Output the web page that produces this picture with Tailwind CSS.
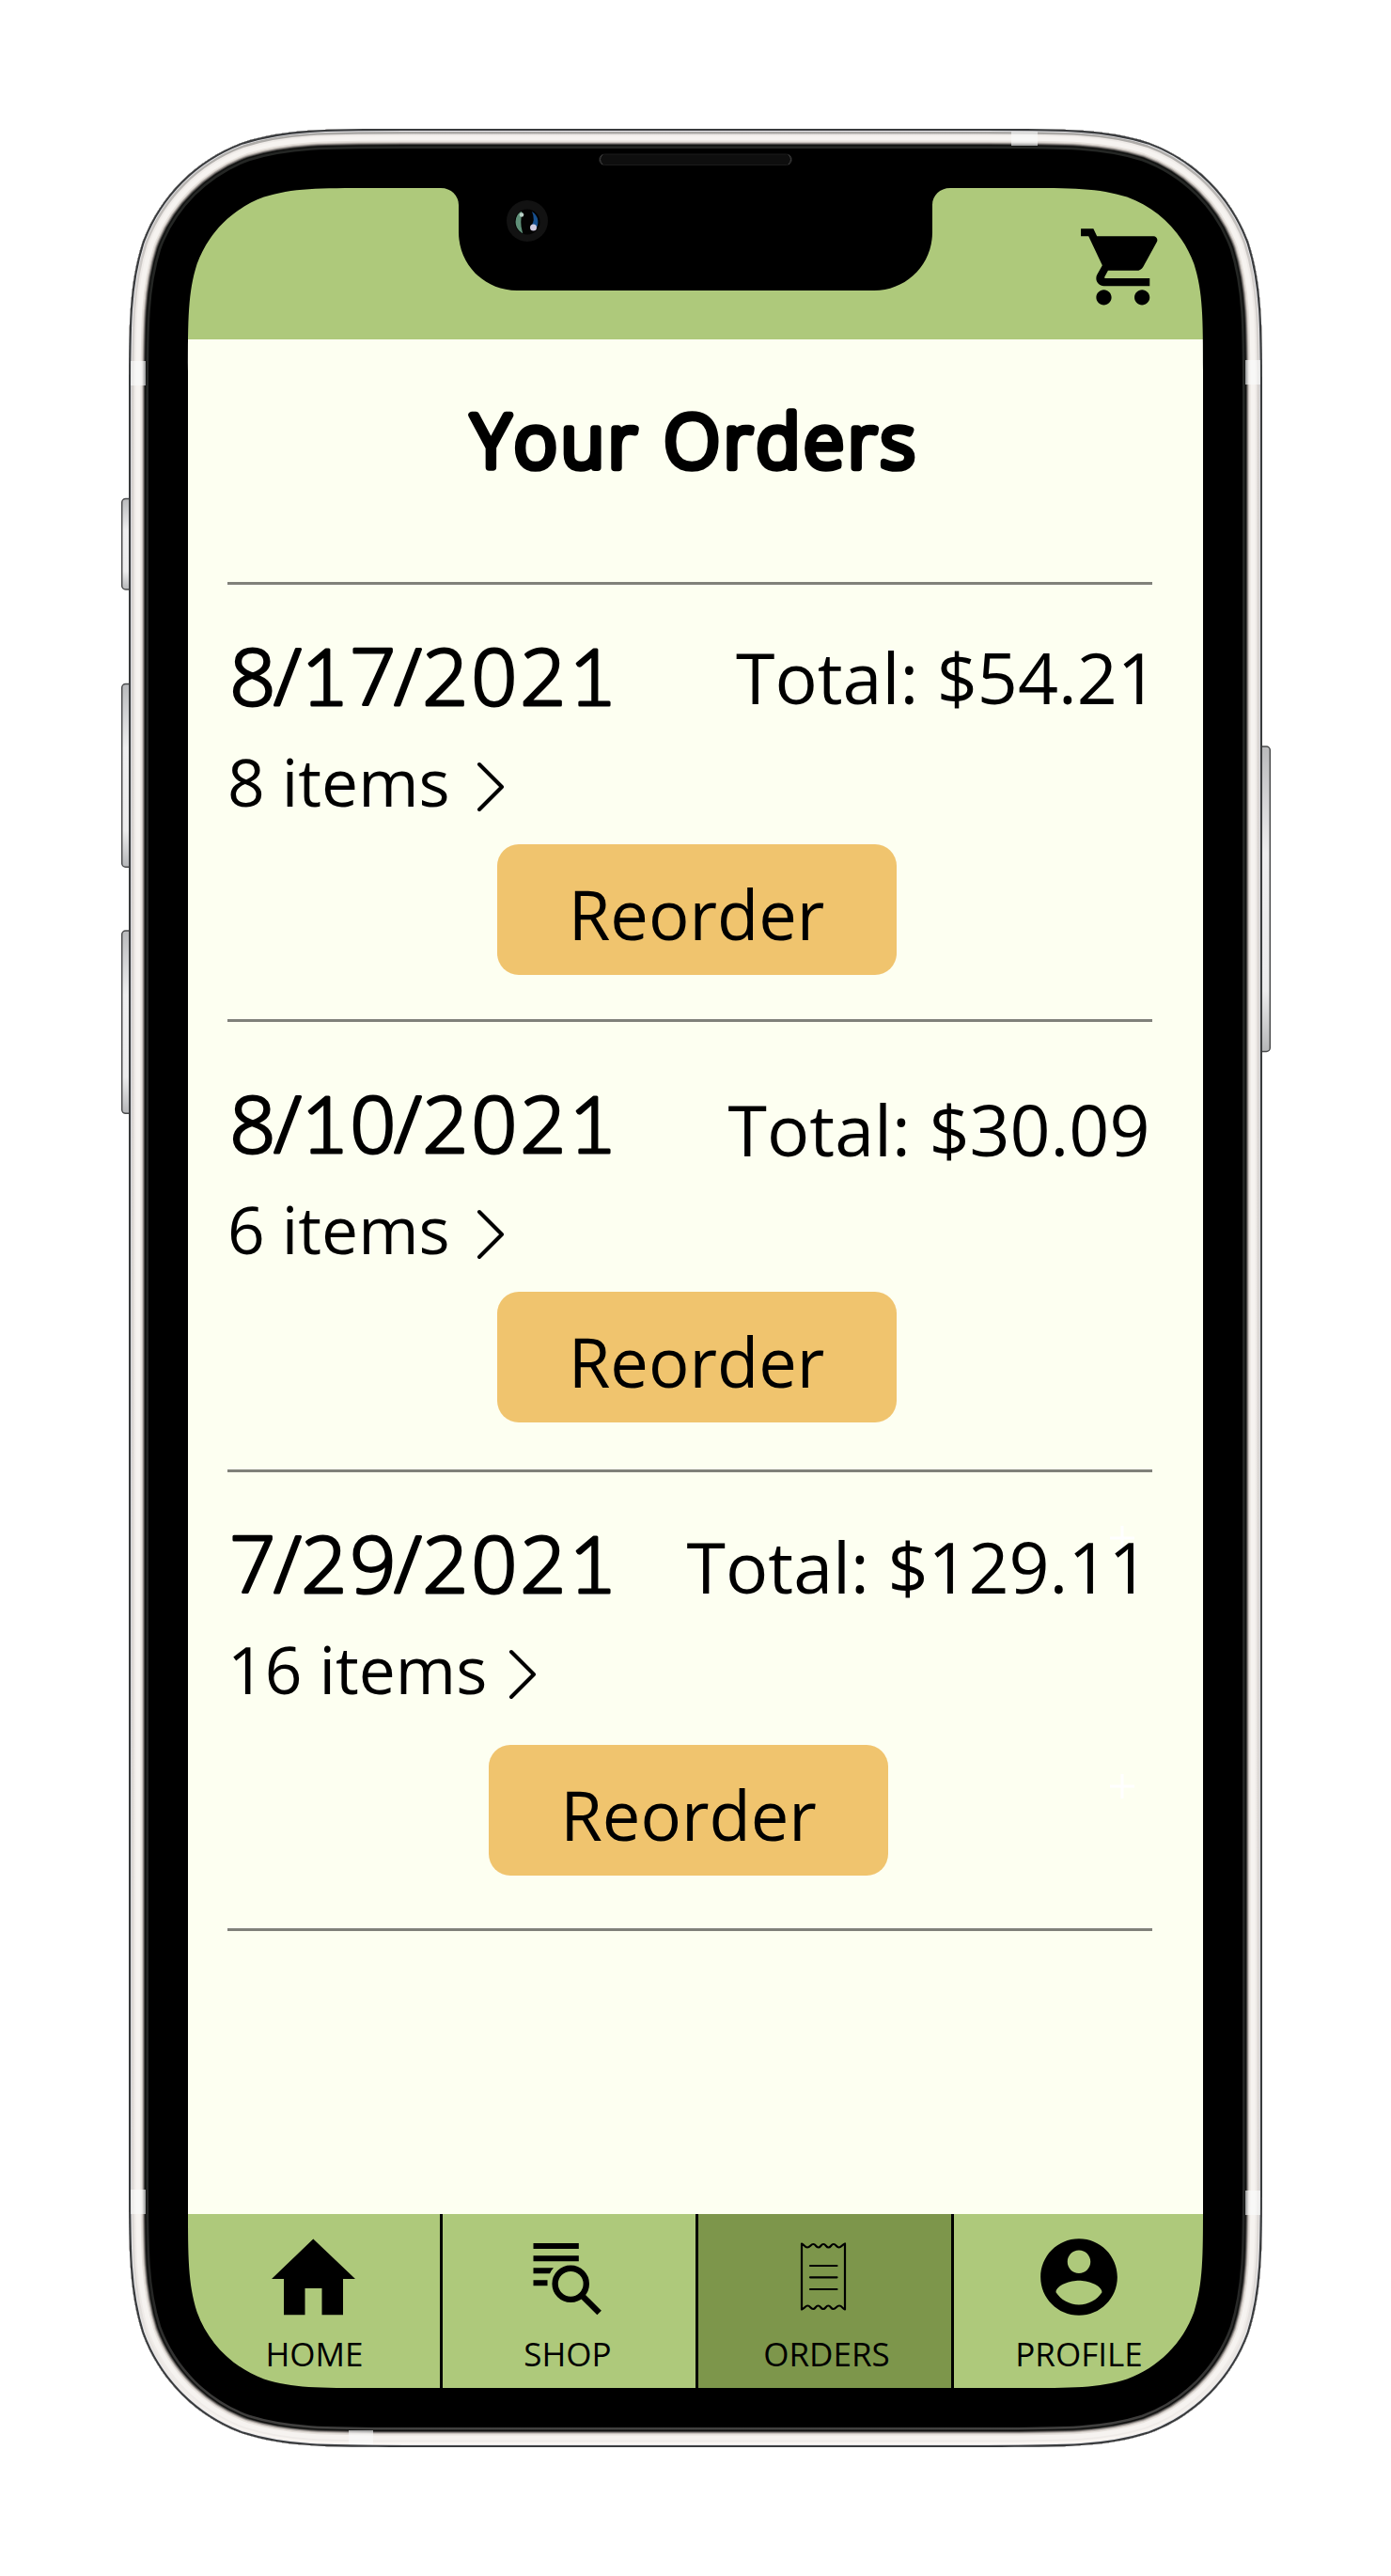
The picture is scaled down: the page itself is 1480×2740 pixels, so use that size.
<!DOCTYPE html>
<html lang="en">
<head>
<meta charset="utf-8">
<title>Your Orders</title>
<script src="https://cdn.jsdelivr.net/npm/@tailwindcss/browser@4"></script>
</head>
<body class="bg-white">
<div class="relative h-[2740px] w-[1480px] overflow-hidden p-[200px] font-['Open_Sans',sans-serif] text-black">

  <!-- App screen -->
  <div class="flex h-[2340px] w-[1080px] flex-col bg-[#fdfff1]">
    <header class="flex h-[161px] shrink-0 items-start justify-end bg-[#aec97b] pr-[36px] pt-[35px]">
      <svg class="size-[97.6px]" viewBox="0 0 24 24"><path d="M7 18c-1.1 0-1.99.9-1.99 2S5.9 22 7 22s2-.9 2-2-.9-2-2-2zM1 2v2h2l3.6 7.59-1.35 2.45c-.16.28-.25.61-.25.96 0 1.1.9 2 2 2h12v-2H7.42c-.14 0-.25-.11-.25-.25l.03-.12.9-1.63h7.45c.75 0 1.41-.41 1.75-1.03l3.58-6.49c.08-.14.12-.31.12-.48 0-.55-.45-1-1-1H5.21l-.94-2H1zm16 16c-1.1 0-1.99.9-1.99 2s.89 2 1.99 2 2-.9 2-2-.9-2-2-2z"/></svg>
    </header>

    <main class="relative isolate flex flex-1 flex-col pl-[42px] pr-[54px]">
      <h1 class="h-[258px] shrink-0">
        <svg class="h-[258px] w-[984px]" fill="#000" stroke="#000" stroke-width="7.6" stroke-linejoin="round" font-family="'Open Sans',sans-serif" font-weight="300" font-size="77"><text x="260" y="136" textLength="471">Your Orders</text></svg>
      </h1>

      <section class="flex h-[465px] shrink-0 flex-col border-t-[3px] border-[#80817a] pt-[58px]">
        <div class="flex h-[80px] items-start">
          <svg class="h-[80px] w-[410px] shrink-0 overflow-visible" fill="#000" stroke="#000" stroke-width="3" stroke-linejoin="round" font-family="'Open Sans',sans-serif" font-weight="300" font-size="82"><text transform="scale(1.04 1)" y="70" x="2.4 47.6 75.5 125.5 170.7 199.5 249.5 299.5 349.5">8/<tspan font-family="Lato">1</tspan>7/202<tspan font-family="Lato">1</tspan></text></svg>
          <span class="ml-[131px] whitespace-nowrap text-[75.3px] leading-[80px]">Total: $54.21</span>
        </div>
        <a class="mt-[31px] flex h-[80px] items-center text-[69.5px] leading-[80px]"><span>8 items</span>
          <svg class="ml-[28px] mt-[12px] h-[56px] w-[32px]" viewBox="0 0 32 56" fill="none" stroke="#000" stroke-width="4" stroke-linecap="round" stroke-linejoin="round"><path d="M3 4 27 28 3 52"/></svg></a>
        <button class="ml-[286.5px] mt-[27px] flex h-[138.5px] w-[425px] items-center justify-center rounded-[23px] bg-[#f0c46e] pt-[9px] text-[72.3px] leading-none">Reorder</button>
      </section>

      <section class="flex h-[479px] shrink-0 flex-col border-t-[3px] border-[#80817a] pt-[69px]">
        <div class="flex h-[80px] items-start">
          <svg class="h-[80px] w-[410px] shrink-0 overflow-visible" fill="#000" stroke="#000" stroke-width="3" stroke-linejoin="round" font-family="'Open Sans',sans-serif" font-weight="300" font-size="82"><text transform="scale(1.04 1)" y="70" x="2.4 47.6 75.5 125.5 170.7 199.5 249.5 299.5 349.5">8/<tspan font-family="Lato">1</tspan>0/202<tspan font-family="Lato">1</tspan></text></svg>
          <span class="ml-[122.6px] mt-[5px] whitespace-nowrap text-[75.3px] leading-[80px]">Total: $30.09</span>
        </div>
        <a class="mt-[31px] flex h-[80px] items-center text-[69.5px] leading-[80px]"><span>6 items</span>
          <svg class="ml-[28px] mt-[12px] h-[56px] w-[32px]" viewBox="0 0 32 56" fill="none" stroke="#000" stroke-width="4" stroke-linecap="round" stroke-linejoin="round"><path d="M3 4 27 28 3 52"/></svg></a>
        <button class="ml-[286.5px] mt-[27px] flex h-[138.5px] w-[425px] items-center justify-center rounded-[23px] bg-[#f0c46e] pt-[9px] text-[72.3px] leading-none">Reorder</button>
      </section>

      <section class="flex h-[491px] shrink-0 flex-col border-y-[3px] border-[#80817a] pt-[58px]">
        <div class="flex h-[80px] items-start">
          <svg class="h-[80px] w-[410px] shrink-0 overflow-visible" fill="#000" stroke="#000" stroke-width="3" stroke-linejoin="round" font-family="'Open Sans',sans-serif" font-weight="300" font-size="82"><text transform="scale(1.04 1)" y="70" x="2.4 47.6 75.5 125.5 170.7 199.5 249.5 299.5 349.5">7/29/202<tspan font-family="Lato">1</tspan></text></svg>
          <span class="ml-[78.6px] mt-[2px] whitespace-nowrap text-[75.3px] leading-[80px]">Total: $129.11</span>
        </div>
        <a class="mt-[31px] flex h-[80px] items-center text-[69.5px] leading-[80px]"><span>16 items</span>
          <svg class="ml-[23px] mt-[12px] h-[56px] w-[32px]" viewBox="0 0 32 56" fill="none" stroke="#000" stroke-width="4" stroke-linecap="round" stroke-linejoin="round"><path d="M3 4 27 28 3 52"/></svg></a>
        <button class="ml-[278px] mt-[41px] flex h-[138.5px] w-[425px] items-center justify-center rounded-[23px] bg-[#f0c46e] pt-[9px] text-[72.3px] leading-none">Reorder</button>
      </section>

      <svg class="absolute left-[981px] top-[1262px] -z-10 h-[290px] w-[26px]" stroke="#fff" stroke-width="3"><path d="M13 0v26M0 13h26M13 264v26M0 277h26"/></svg>
    </main>

    <nav class="flex h-[185px] shrink-0 bg-[#aec97b] text-[35px] leading-[40px]">
      <a class="flex w-[271px] flex-col items-center border-r-[3px] border-black">
        <svg class="mt-[20px] h-[90px] w-[100px]" viewBox="0 0 100 90"><path d="M49.3 6.5 94 49H81v38.300H58.500V59H40.500V87.300H18V49H5Z"/></svg>
        <span class="mt-[19px] pl-px">HOME</span>
      </a>
      <a class="flex w-[272px] flex-col items-center border-r-[3px] border-black">
        <svg class="mt-[20px] h-[90px] w-[100px]" viewBox="555.5 2375 100 90"><path d="M567 2386h48.300v6H567zM567 2399.200h48.300v6H567zM567 2412.300h21.500q-2.500 2.500-4 6H567zM567 2425.300h15v6H567z"/><circle cx="606.700" cy="2429.300" r="16.600" fill="none" stroke="#000" stroke-width="6.400"/><path d="m618.500 2441.500 18.600 18.500" stroke="#000" stroke-width="6.400"/></svg>
        <span class="mt-[19px] pr-[3px]">SHOP</span>
      </a>
      <a class="flex w-[272px] flex-col items-center border-r-[3px] border-black bg-[#7d964b]">
        <svg class="mt-[20px] h-[90px] w-[100px]" viewBox="827.5 2375 100 90" fill="none" stroke="#000" stroke-width="2.200" stroke-linecap="round" stroke-linejoin="round"><path d="M852.500 2386.500c3 1 3 4 6 4s3.500-3.500 6.300-3.500 2.700 3.500 5.400 3.500 2.700-3.500 5.400-3.500 2.700 3.500 5.400 3.500 2.700-3.500 5.400-3.500 3 3.500 5.700 3.500 3.200-3 6.400-4v70c-3-1-3-4-6-4s-3.500 3.500-6.300 3.500-2.700-3.500-5.400-3.500-2.700 3.500-5.400 3.500-2.700-3.500-5.400-3.500-2.700 3.500-5.400 3.500-3-3.500-5.700-3.500-3.200 3-6.400 4Z"/><path d="M861.500 2410h28.500M861.500 2422.300h28.500M861.500 2435h28.500"/></svg>
        <span class="mt-[19px] pl-[4px]">ORDERS</span>
      </a>
      <a class="flex w-[265px] flex-col items-center">
        <svg class="mt-[17.500px] size-[98px]" viewBox="0 0 24 24"><path d="M12 2C6.480 2 2 6.480 2 12s4.480 10 10 10 10-4.480 10-10S17.520 2 12 2zm0 3c1.660 0 3 1.340 3 3s-1.340 3-3 3-3-1.340-3-3 1.340-3 3-3zm0 14.200c-2.500 0-4.710-1.280-6-3.220.03-1.990 4-3.080 6-3.080 1.990 0 5.970 1.090 6 3.080-1.290 1.940-3.500 3.220-6 3.220z"/></svg>
        <span class="mt-[13.500px] pl-px">PROFILE</span>
      </a>
    </nav>
  </div>

  <!-- Phone body over the screen -->
  <svg class="pointer-events-none absolute inset-0" width="1480" height="2740" viewBox="0 0 1480 2740" fill="none">
    <defs>
      <path id="body" d="M430.500 137H1049.500C1134 137 1176.300 137 1221.800 151.400C1271.400 169.500 1310.500 208.600 1328.600 258.200C1343 303.700 1343 346 1343 430.500V2309.500C1343 2394 1343 2436.300 1328.600 2481.800C1310.500 2531.400 1271.400 2570.500 1221.800 2588.600C1176.300 2603 1134 2603 1049.500 2603H430.500C346 2603 303.700 2603 258.200 2588.600C208.600 2570.500 169.500 2531.400 151.400 2481.800C137 2436.300 137 2394 137 2309.500V430.500C137 346 137 303.700 151.400 258.200C169.500 208.600 208.600 169.500 258.200 151.400C303.700 137 346 137 430.500 137Z"/>
      <clipPath id="bezel"><path clip-rule="evenodd" d="M0 0H1480V2740H0ZM395.700 200H469C480 200 488 208 488 218V247C488 282 516 309 550 309H930C964 309 992 282 992 247V218C992 208 1000 200 1011 200H1084.300C1140.700 200 1168.800 200 1199.200 209.600C1232.300 221.600 1258.400 247.700 1270.400 280.800C1280 311.200 1280 339.300 1280 395.700V2344.300C1280 2400.700 1280 2428.800 1270.400 2459.200C1258.400 2492.300 1232.300 2518.400 1199.200 2530.400C1168.800 2540 1140.700 2540 1084.300 2540H395.700C339.300 2540 311.200 2540 280.800 2530.400C247.700 2518.400 221.600 2492.300 209.600 2459.200C200 2428.800 200 2400.700 200 2344.300V395.700C200 339.300 200 311.200 209.600 280.800C221.600 247.700 247.700 221.600 280.800 209.600C311.200 200 339.300 200 395.700 200Z"/></clipPath>
      <clipPath id="edge"><use href="#body"/></clipPath>
      <linearGradient id="outer" gradientUnits="userSpaceOnUse" x1="0" y1="137" x2="0" y2="2603"><stop offset="0" stop-color="#a9a7a4"/><stop offset=".07" stop-color="#d6d2cf"/><stop offset=".93" stop-color="#dedad7"/><stop offset="1" stop-color="#faf6f2"/></linearGradient>
      <linearGradient id="lip" gradientUnits="userSpaceOnUse" x1="0" y1="137" x2="0" y2="2603"><stop offset="0" stop-color="#242624"/><stop offset=".93" stop-color="#242524"/><stop offset="1" stop-color="#454443"/></linearGradient>
      <linearGradient id="key" x1="0" y1="0" x2="0" y2="1"><stop offset="0" stop-color="#b9babc"/><stop offset=".35" stop-color="#eeeeef"/><stop offset=".8" stop-color="#ececed"/><stop offset="1" stop-color="#b5b6b8"/></linearGradient>
    </defs>
    <g fill="url(#key)" stroke="#4a4b4c" stroke-width="1.500">
      <rect x="129.700" y="530.500" width="16" height="96.500" rx="4"/>
      <rect x="129.700" y="727.500" width="16" height="194.700" rx="4"/>
      <rect x="129.700" y="990" width="16" height="194.300" rx="4"/>
      <rect x="1334" y="794" width="17.300" height="324.500" rx="4"/>
    </g>
    <g clip-path="url(#bezel)">
      <use href="#body" fill="#000"/>
      <g clip-path="url(#edge)">
        <use href="#body" stroke="url(#lip)" stroke-width="42"/>
        <use href="#body" stroke="#111211" stroke-width="37"/>
        <use href="#body" stroke="#4a4846" stroke-width="34"/>
        <use href="#body" stroke="#8f8a87" stroke-width="32"/>
        <use href="#body" stroke="#c9c3be" stroke-width="30"/>
        <use href="#body" stroke="#e6e1dc" stroke-width="28"/>
        <use href="#body" stroke="#f6f3f0" stroke-width="25"/>
        <use href="#body" stroke="#efebe8" stroke-width="15"/>
        <use href="#body" stroke="url(#outer)" stroke-width="11"/>
        <use href="#body" stroke="#e4e4e8" stroke-width="6"/>
        <use href="#body" stroke="#393b3d" stroke-width="4.200"/>
      </g>
      <g fill="#fafbfc" fill-opacity=".6">
        <path d="M139 384h16v26h-16zM1325 383h16v26h-16zM139 2329h16v26h-16zM1325 2330h16v26h-16zM1076 140h28v15h-28zM371 2585h26v15h-26z"/>
      </g>
      <rect x="637.500" y="164" width="205" height="11.500" rx="5.700" fill="#0e0e0e" stroke="#1b1b1b"/>
      <path d="M641 164.500q-5 5 0 10.500M839 164.500q5 5 0 10.500" stroke="#444"/>
      <circle cx="561" cy="235" r="22" fill="#121212"/>
      <circle cx="561" cy="236" r="13.500" fill="#030303"/>
      <path d="M555 225.500a12.500 12.500 0 0 0 0 21q-3-10 0-21" fill="#5f8f78" stroke="#5f8f78" stroke-width="1.500"/>
      <path d="M566 225a13 13 0 0 1 3 20q-1-3-4-4 5-7 1-16" fill="#17508f"/>
      <circle cx="555" cy="228.500" r="2.300" fill="#b9d0c6"/>
      <circle cx="567.500" cy="242" r="3.500" fill="#cfcbe0"/>
    </g>
  </svg>
</div>
</body>
</html>
